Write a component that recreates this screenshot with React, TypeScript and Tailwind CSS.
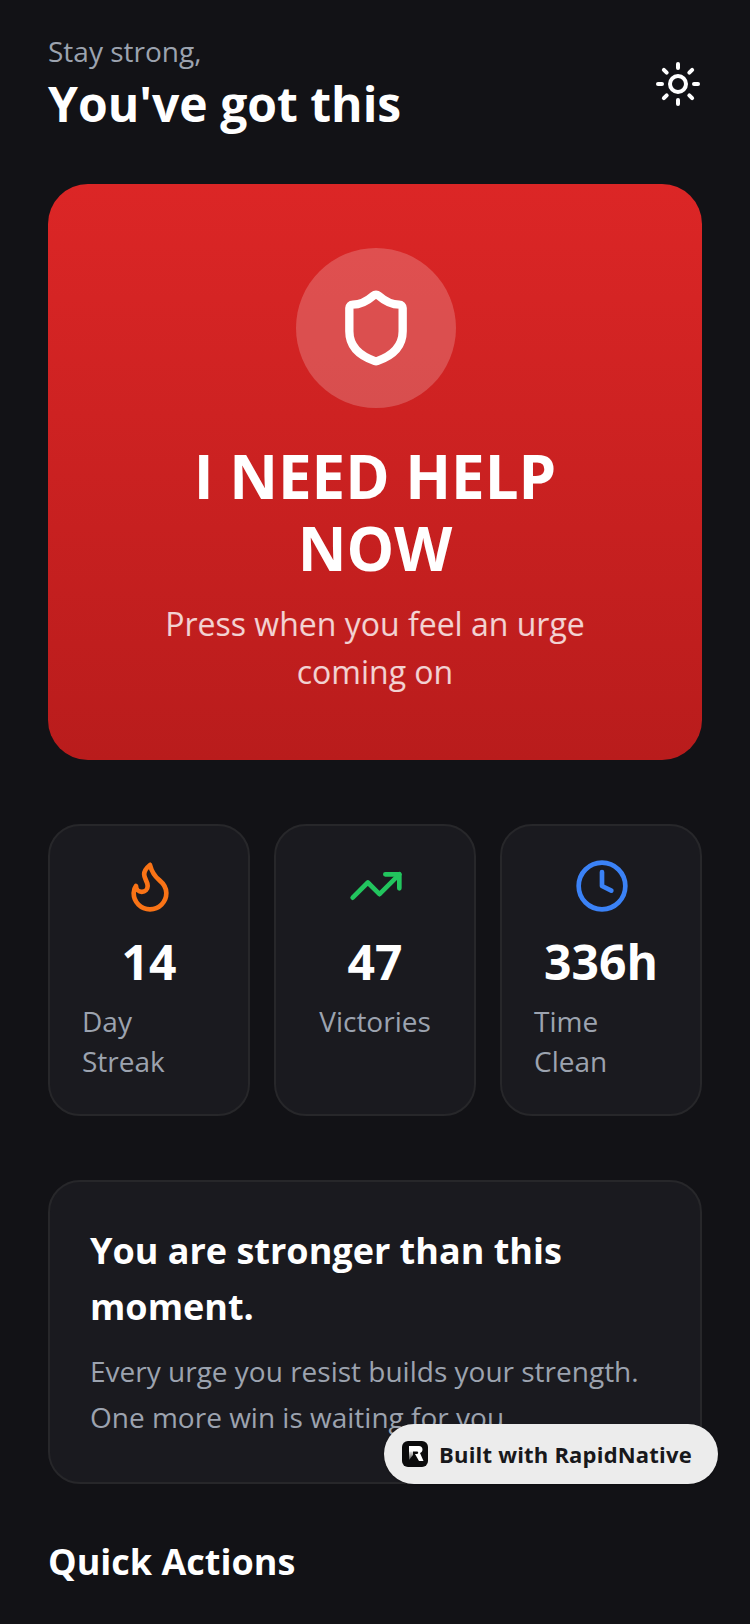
import { Clock, Flame, Shield, Sun, TrendingUp } from 'lucide-react'
import type { ReactNode } from 'react'

type Stat = {
  icon: ReactNode
  value: string
  label: string
}

const stats: Stat[] = [
  { icon: <Flame size={56} color="#f97316" />, value: '14', label: 'Day Streak' },
  { icon: <TrendingUp size={56} color="#22c55e" />, value: '47', label: 'Victories' },
  { icon: <Clock size={56} color="#3b82f6" />, value: '336h', label: 'Time Clean' },
]

function StatCard({ icon, value, label }: Stat) {
  return (
    <div className="flex h-[292px] flex-1 flex-col items-center rounded-[32px] border-2 border-[#27272a] bg-[#1a1a1f] p-8">
      <div className="ml-[2px]">{icon}</div>
      <div className="mt-4 text-[48px] leading-[64px] font-bold text-white">{value}</div>
      <div className="mt-[7px] text-[28px] leading-[40px] text-[#9ca3af]">{label}</div>
    </div>
  )
}

function RapidNativeBadge() {
  return (
    <div className="absolute top-[1424px] left-[384px] flex h-[60px] w-[334px] items-center gap-[11px] rounded-full bg-[#ececec] pl-[18px] shadow-[0_1px_2px_rgba(0,0,0,0.25)]">
      <svg width="26" height="26" viewBox="0 0 26 26">
        <defs>
          <linearGradient id="rn-stem" x1="0" y1="0" x2="0" y2="1">
            <stop offset="0" stopColor="#ffffff" />
            <stop offset="1" stopColor="#4b4b4b" />
          </linearGradient>
        </defs>
        <rect width="26" height="26" rx="6" fill="#0b0b0c" />
        <path d="M7 9h4v5l-4 5z" fill="url(#rn-stem)" />
        <path d="M7 5h10c2 0 3.5 1.5 3.5 3.5 0 1.8-1 3-2.5 3.5l3.5 8h-4.5l-4-7h2c.8 0 1.2-.6 1.2-1.2 0-.7-.5-1.3-1.2-1.3H7z" fill="#ffffff" />
      </svg>
      <span className="text-[22px] leading-[32px] font-bold tracking-[0.2px] text-[#18181b]">Built with RapidNative</span>
    </div>
  )
}

export default function App() {
  return (
    <div className="relative h-[1624px] w-[750px] overflow-hidden bg-[#121216] px-12 pt-[31px] font-['Open_Sans',sans-serif]">
      <header className="flex items-center justify-between">
        <div>
          <p className="text-[28px] leading-[41px] text-[#9ca3af]">Stay strong,</p>
          <h1 className="text-[48px] leading-[64px] font-bold text-white">You've got this</h1>
        </div>
        <Sun size={48} color="#ffffff" />
      </header>

      <section className="mt-12 flex h-[576px] flex-col items-center rounded-[40px] bg-gradient-to-b from-[#dc2626] to-[#b91c1c] px-16 pt-16 text-center">
        <div className="ml-[2px] flex h-40 w-40 items-center justify-center rounded-full bg-white/20">
          <Shield size={80} color="#ffffff" strokeWidth={2.5} />
        </div>
        <h2 className="mt-8 text-[60px] leading-[72px] font-bold text-white">I NEED HELP NOW</h2>
        <p className="mt-4 text-[32px] leading-[48px] text-white/80">Press when you feel an urge coming on</p>
      </section>

      <section className="mt-16 flex gap-6">
        {stats.map((stat) => (
          <StatCard key={stat.label} {...stat} />
        ))}
      </section>

      <section className="mt-16 h-[304px] rounded-[32px] border-2 border-[#27272a] bg-[#1a1a1f] px-10 pt-[41px]">
        <h3 className="text-[36px] leading-[56px] font-bold text-white">You are stronger than this moment.</h3>
        <p className="mt-[13px] text-[28px] leading-[46px] text-[#9ca3af]">Every urge you resist builds your strength. One more win is waiting for you.</p>
      </section>

      <h3 className="mt-14 text-[36px] leading-[44px] font-bold text-white">Quick Actions</h3>

      <RapidNativeBadge />
    </div>
  )
}
